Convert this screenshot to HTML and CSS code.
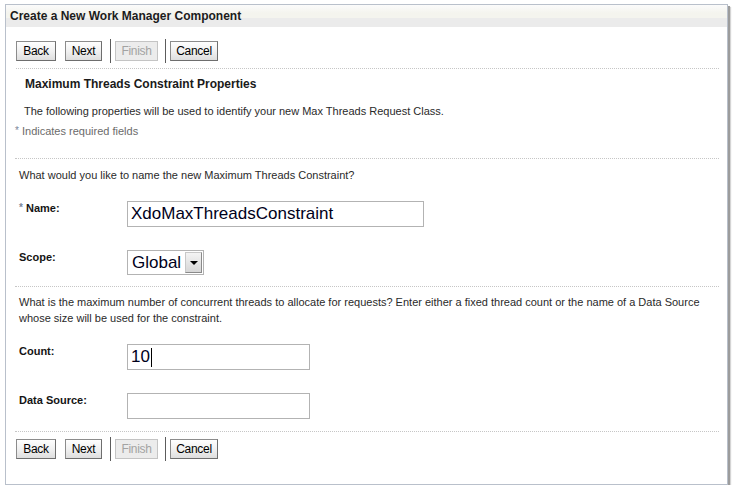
FILE: index.html
```html
<!DOCTYPE html>
<html>
<head>
<meta charset="utf-8">
<title>Create a New Work Manager Component</title>
<link rel="stylesheet" href="styles.css">
</head>
<body>
<div class="panel">
  <div class="header">Create a New Work Manager Component</div>
  <div class="content">
    <div class="toolbar">
      <button class="btn btn-back">Back</button>
      <button class="btn btn-next">Next</button>
      <span class="sep"></span>
      <button class="btn btn-finish" disabled>Finish</button>
      <span class="sep"></span>
      <button class="btn btn-cancel">Cancel</button>
    </div>
    <div class="rule rule-top"></div>
    <h2 class="section-title">Maximum Threads Constraint Properties</h2>
    <p class="intro">The following properties will be used to identify your new Max Threads Request Class.</p>
    <p class="required"><span class="ast">*</span> Indicates required fields</p>
    <div class="rule rule-name"></div>
    <p class="question q-name">What would you like to name the new Maximum Threads Constraint?</p>
    <div class="row row-name">
      <label class="label"><span class="ast">*</span> Name:</label>
      <div class="input input-wide">XdoMaxThreadsConstraint</div>
    </div>
    <div class="row row-scope">
      <label class="label">Scope:</label>
      <div class="select">
        <span class="select-value">Global</span>
        <span class="select-btn"><span class="arrow"></span></span>
      </div>
    </div>
    <div class="rule rule-count"></div>
    <p class="question q-count">What is the maximum number of concurrent threads to allocate for requests? Enter either a fixed thread count or the name of a Data Source<br>whose size will be used for the constraint.</p>
    <div class="row row-count">
      <label class="label">Count:</label>
      <div class="input input-short">10<span class="caret"></span></div>
    </div>
    <div class="row row-ds">
      <label class="label">Data Source:</label>
      <div class="input input-short"></div>
    </div>
    <div class="rule rule-bottom"></div>
    <div class="toolbar toolbar-bottom">
      <button class="btn btn-back">Back</button>
      <button class="btn btn-next">Next</button>
      <span class="sep"></span>
      <button class="btn btn-finish" disabled>Finish</button>
      <span class="sep"></span>
      <button class="btn btn-cancel">Cancel</button>
    </div>
  </div>
</div>
</body>
</html>
```
FILE: styles.css
```css
* { box-sizing: border-box; }
html, body { margin: 0; background: #fff; }
body {
  padding: 4px 0 0 5px;
  font-family: "Liberation Sans", Arial, sans-serif;
  font-size: 11px;
  color: #222;
}
.panel {
  width: 723px;
  height: 481px;
  border: 1px solid #b9c0cb;
  background: #fff;
  box-shadow: 2px 2px 0 #9c9c9c, 3px 3px 1px #d4d4d4;
}
.header {
  height: 22px;
  line-height: 22px;
  padding-left: 4px;
  font-weight: bold;
  font-size: 12px;
  color: #1c1c1c;
  background: linear-gradient(to bottom, #fbfbfb 0, #f4f4ee 8px, #f4f4ee 13px, #ebebeb 13px, #ebebeb 100%);
}
.content { padding: 0 8px 0 9px; }
.toolbar {
  display: flex;
  align-items: center;
  height: 24px;
  margin-top: 12px;
  padding-left: 1px;
}
.toolbar-bottom { margin-top: 5px; }
.btn {
  height: 20px;
  padding: 0;
  margin: 0;
  border: 1px solid #8c8c8c;
  border-right-color: #6e6e6e;
  border-bottom-color: #6e6e6e;
  background: linear-gradient(to bottom, #fefefe 0, #f1f1f1 50%, #dedede 100%);
  font-family: "Liberation Sans", Arial, sans-serif;
  font-size: 12px;
  color: #000;
  letter-spacing: -0.3px;
}
.btn-back { width: 40px; }
.btn-next { width: 37px; margin-left: 9px; }
.btn-finish {
  width: 43px;
  margin-left: 4px;
  color: #a3a3a3;
  border-color: #c4c4c4;
  background: #ececec;
}
.btn-cancel { width: 48px; margin-left: 4px; }
.sep {
  width: 1px;
  height: 24px;
  background: #5c5c5c;
  margin-left: 8px;
}
.btn-finish + .sep { margin-left: 7px; }
.rule {
  height: 0;
  border-top: 1px dotted #c6c6c6;
}
.rule-top { margin-top: 5px; margin-left: 1px; }
.section-title {
  margin: 7px 0 0 0;
  padding-left: 10px;
  font-size: 12px;
  line-height: 16px;
  font-weight: bold;
  color: #1a1a1a;
}
.intro {
  margin: 11px 0 0 0;
  padding-left: 9px;
  line-height: 16px;
  color: #2a2a2a;
}
.required {
  margin: 4px 0 0 0;
  line-height: 16px;
  color: #6b6b6b;
}
.ast { color: #7a869a; font-size: 10px; vertical-align: 1px; }
.rule-name { margin-top: 19px; }
.question {
  margin: 8px 0 0 0;
  padding-left: 4px;
  line-height: 16px;
  color: #2a2a2a;
}
.q-count { margin-top: 7px; }
.row {
  display: flex;
  align-items: flex-start;
}
.row-name { margin-top: 18px; }
.row-scope { margin-top: 23px; }
.row-count { margin-top: 18px; }
.row-ds { margin-top: 23px; }
.label {
  width: 112px;
  padding-left: 4px;
  line-height: 14px;
  font-weight: bold;
  color: #141414;
}
.input {
  height: 26px;
  border: 1px solid #b3b3b3;
  padding-left: 3px;
  font-family: "Liberation Sans", Arial, sans-serif;
  font-size: 17px;
  line-height: 24px;
  color: #00001a;
  display: flex;
  align-items: center;
}
.input-wide { width: 297px; }
.input-short { width: 183px; }
.caret {
  display: inline-block;
  width: 1px;
  height: 19px;
  background: #000;
  margin-left: 1px;
}
.rule-count { margin-top: 11px; }
.select {
  width: 77px;
  height: 25px;
  border: 1px solid #b3b3b3;
  display: flex;
  align-items: center;
  padding: 0 1px 0 4px;
}
.select-value {
  flex: 1;
  font-size: 17px;
  color: #00001a;
}
.select-btn {
  width: 17px;
  height: 21px;
  border: 1px solid #8a8a8a;
  border-top-color: #c8c8c8;
  border-left-color: #c8c8c8;
  background: linear-gradient(to bottom, #f4f4f4, #d6d6d6);
  display: flex;
  align-items: center;
  justify-content: center;
}
.arrow {
  width: 0;
  height: 0;
  border-left: 4px solid transparent;
  border-right: 4px solid transparent;
  border-top: 4px solid #000;
}
.rule-bottom { margin-top: 12px; }
```
